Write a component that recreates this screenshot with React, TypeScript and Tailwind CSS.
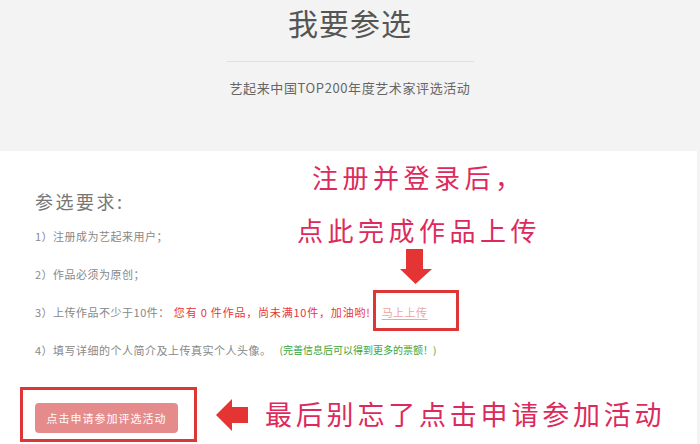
const cjk = { fontFamily: '"Noto Sans CJK SC", "Liberation Sans", sans-serif' };

function DownArrow() {
  return (
    <svg width="32" height="35" viewBox="0 0 32 35" className="absolute left-[400px] top-[249px]">
      <path d="M6 0h17v20h9L15.5 35 0 20h6z" fill="#e53434" />
    </svg>
  );
}

function LeftArrow() {
  return (
    <svg width="32" height="32" viewBox="0 0 32 32" className="absolute left-[216px] top-[399px]">
      <path d="M0 16 16 0v8h16v16H16v8z" fill="#e53434" />
    </svg>
  );
}

export default function App() {
  return (
    <div className="w-[700px] h-[444px] overflow-hidden bg-[#f3f3f3] relative" style={cjk}>
      <div className="h-[151px] flex flex-col items-center">
        <h1 className="mt-[3px] text-[30px] leading-[38px] text-[#555] tracking-[1px]">我要参选</h1>
        <div className="mt-[20px] w-[247px] h-px bg-[#e0e0e0]" />
        <p className="mt-[17px] text-[13px] leading-[18px] text-[#666] tracking-[0.6px]">艺起来中国TOP200年度艺术家评选活动</p>
      </div>

      <div className="w-[697px] h-[293px] bg-white pl-[35px] pt-[37px]">
        <h2 className="text-[18px] leading-[26px] text-[#777] tracking-[2.5px]">参选要求:</h2>
        <ul className="mt-[14px] flex flex-col gap-[22px] text-[11px] leading-[16px] text-[#888] tracking-[0.5px]">
          <li>1）注册成为艺起来用户；</li>
          <li>2）作品必须为原创；</li>
          <li className="flex">
            <span>3）上传作品不少于10件：</span>
            <span className="ml-[4px] text-[#e8353c] tracking-[0.8px]">您有 0 件作品，尚未满10件，加油哟!</span>
            <a className="ml-[11px] text-[#eba6a0] underline underline-offset-2">马上上传</a>
          </li>
          <li className="flex">
            <span>4）填写详细的个人简介及上传真实个人头像。</span>
            <span className="ml-[8px] text-[10px] text-[#3aa53a] tracking-normal">(完善信息后可以得到更多的票额！)</span>
          </li>
        </ul>
        <button className="mt-[45px] w-[143px] h-[30px] rounded-[4px] bg-[#e58b8b] text-white text-[11px] tracking-[1px]">
          点击申请参加评选活动
        </button>
      </div>

      <p className="absolute left-[312px] top-[161px] text-[26px] leading-[32px] text-[#dd2a5c] tracking-[4.5px]">注册并登录后，</p>
      <p className="absolute left-[297px] top-[214px] text-[26px] leading-[32px] text-[#dd2a5c] tracking-[4.5px]">点此完成作品上传</p>
      <DownArrow />
      <div className="absolute left-[373px] top-[290px] w-[86px] h-[41px] border-[3px] border-[#dc3636]" />
      <div className="absolute left-[20px] top-[387px] w-[177px] h-[55px] border-[3px] border-[#dc3636]" />
      <LeftArrow />
      <p className="absolute left-[265px] top-[397px] text-[27px] leading-[34px] text-[#dd2a5c] tracking-[3.8px]">最后别忘了点击申请参加活动</p>
    </div>
  );
}
